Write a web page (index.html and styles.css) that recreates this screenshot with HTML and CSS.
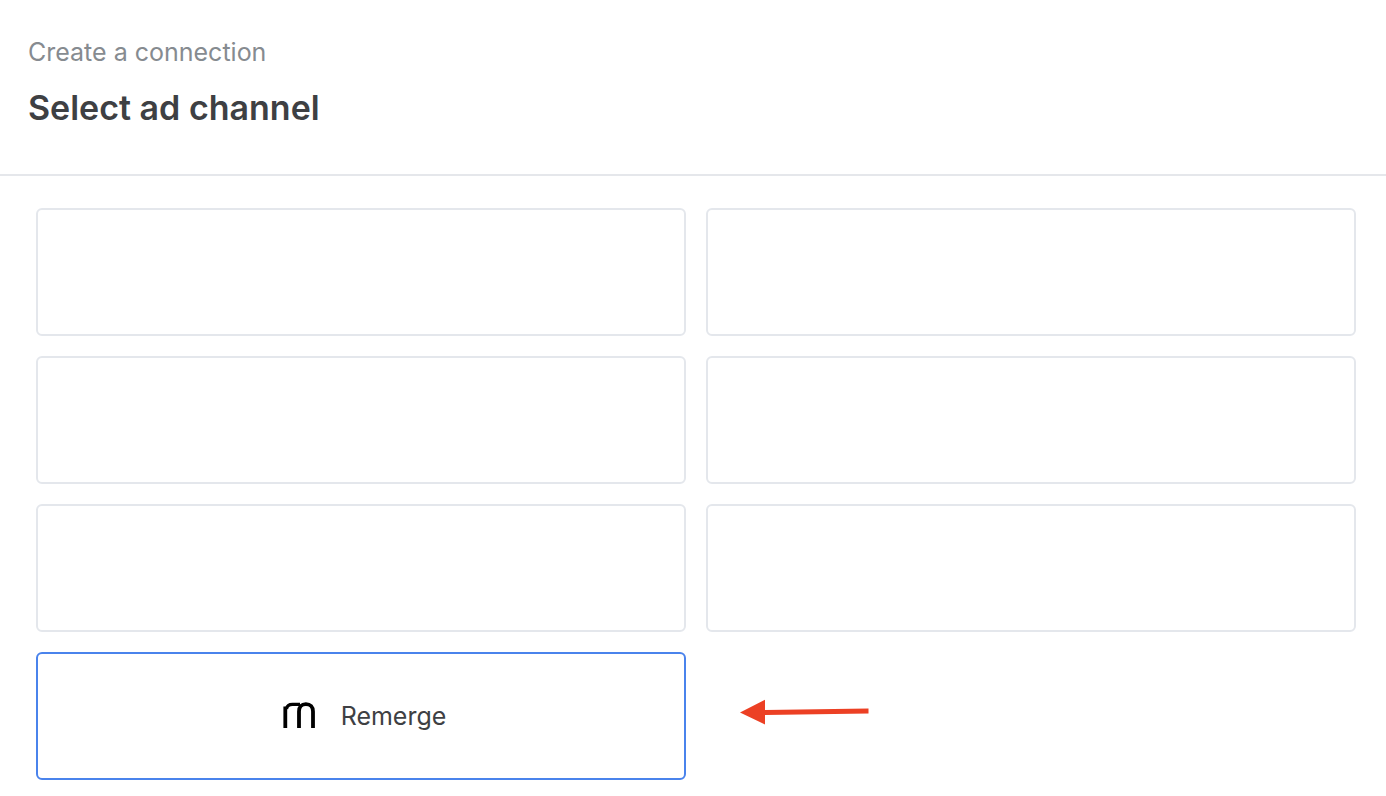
FILE: index.html
```html
<!DOCTYPE html>
<html lang="en">
<head>
<meta charset="utf-8">
<meta name="viewport" content="width=device-width, initial-scale=1">
<title>Select ad channel</title>
<link rel="stylesheet" href="styles.css">
</head>
<body>
<header class="header">
  <p class="eyebrow">Create a connection</p>
  <h1 class="title">Select ad channel</h1>
</header>
<main class="channels">
  <button class="channel" type="button" aria-label="Channel 1"></button>
  <button class="channel" type="button" aria-label="Channel 2"></button>
  <button class="channel" type="button" aria-label="Channel 3"></button>
  <button class="channel" type="button" aria-label="Channel 4"></button>
  <button class="channel" type="button" aria-label="Channel 5"></button>
  <button class="channel" type="button" aria-label="Channel 6"></button>
  <button class="channel selected" type="button">
    <svg class="logo" width="34" height="28" viewBox="0 0 34 28" fill="none" stroke="#000" aria-hidden="true">
      <path d="M3.300 26V4.500" stroke-width="3.800"/>
      <path d="M4.500 7C5 4 7 2.400 10.500 2.400H18" stroke-width="3.200"/>
      <path d="M17 26V9.500C17 5 19.500 2.200 23.900 2.200C28.400 2.200 31 5 31 9.500V26" stroke-width="3.800"/>
    </svg>
    <span>Remerge</span>
  </button>
  <div class="pointer">
    <svg width="129" height="26" viewBox="0 0 129 26" fill="#ec4024" aria-hidden="true">
      <path d="M0 13.500L25 0.700V11L128.500 9.500V14.500L25 16V25.500Z"/>
    </svg>
  </div>
</main>
</body>
</html>
```
FILE: styles.css
```css
* {
  box-sizing: border-box;
}

body {
  margin: 0;
  background: #fff;
  color: #3e4043;
  font-family: Inter, "Liberation Sans", sans-serif;
}

.header {
  padding: 36px 28px 42px;
  border-bottom: 2px solid #e5e7eb;
}

.eyebrow {
  margin: 0 0 16px;
  color: #868b90;
  font-size: 25px;
  line-height: 32px;
}

.title {
  margin: 0;
  font-size: 34px;
  font-weight: 600;
  line-height: 48px;
}

.channels {
  display: grid;
  grid-template-columns: 1fr 1fr;
  gap: 20px;
  padding: 32px 30px 16px 36px;
}

.channel {
  display: flex;
  align-items: center;
  justify-content: center;
  gap: 25px;
  min-height: 128px;
  padding: 0 20px 0 26px;
  border: 2px solid #e4e7ec;
  border-radius: 6px;
  background: #fff;
  color: inherit;
  font: inherit;
  font-size: 25px;
  cursor: pointer;
}

.selected {
  border-color: #4a83ec;
}

.pointer {
  display: flex;
  align-items: center;
  padding: 0 34px 8px;
}
```
